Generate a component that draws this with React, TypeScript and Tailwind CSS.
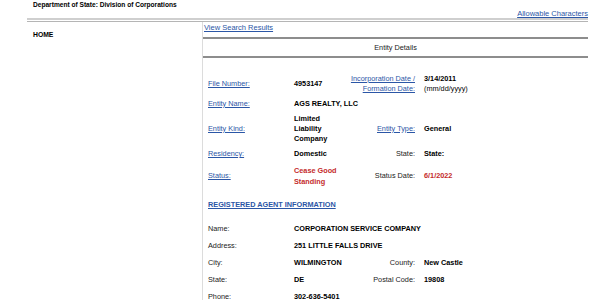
const link = "text-[#2b56a6] underline underline-offset-[1px]"

const Row = ({ children }: { children: React.ReactNode }) => (
    <div className="contents">{children}</div>
)

export default function App() {
    return (
        <div className="w-[600px] h-[300px] overflow-hidden bg-white text-[#222] font-['Liberation_Sans',Arial,sans-serif] text-[7.3px] leading-[10px]">
            <div className="pl-[33px] pt-[0px] font-bold leading-[9px] text-black text-[6.6px]">
                Department of State: Division of Corporations
            </div>
            <div className="flex justify-end pr-[12px] text-[7.5px] leading-[9px]">
                <span className={link}>Allowable Characters</span>
            </div>
            <div className="ml-[27px] mr-[12px]">
                <div className="h-[2px] bg-[#cfcfcf]" />
                <div className="mt-[1px] h-px bg-[#b5b5b5]" />
                <div className="flex">
                    <div className="w-[175px] pl-[6px] pt-[8px] font-bold text-black text-[6.8px]">HOME</div>
                    <div className="flex-1 border-l border-[#dcdcdc]">
                        <div className="h-[17px] border-b-2 border-[#8d8d8d] pl-[1px] pt-[1px]">
                            <span className={link + " text-[7.5px]"}>View Search Results</span>
                        </div>
                        <div className="h-[19px] border-b-2 border-[#8d8d8d] flex items-center justify-center">
                            Entity Details
                        </div>
                        <div className="pl-[5px] pt-[13px] grid grid-cols-[86px_52px_78px_1fr] items-center">
                            <Row>
                                <div className="py-[2.5px]"><span className={link}>File Number:</span></div>
                                <div className="py-[2.5px] font-bold text-black">4953147</div>
                                <div className="py-[2.5px] pr-[9px] text-right"><span className={link}>Incorporation Date / Formation Date:</span></div>
                                <div className="py-[2.5px] text-black"><span className="font-bold">3/14/2011</span><br />(mm/dd/yyyy)</div>
                            </Row>
                            <Row>
                                <div className="py-[2.5px]"><span className={link}>Entity Name:</span></div>
                                <div className="py-[2.5px] col-span-3 font-bold text-black">AGS REALTY, LLC</div>
                            </Row>
                            <Row>
                                <div className="py-[2.5px]"><span className={link}>Entity Kind:</span></div>
                                <div className="py-[2.5px] font-bold text-black">Limited Liability Company</div>
                                <div className="py-[2.5px] pr-[9px] text-right"><span className={link}>Entity Type:</span></div>
                                <div className="py-[2.5px] font-bold text-black">General</div>
                            </Row>
                            <Row>
                                <div className="py-[3px]"><span className={link}>Residency:</span></div>
                                <div className="py-[3px] font-bold text-black">Domestic</div>
                                <div className="py-[3px] pr-[9px] text-right">State:</div>
                                <div className="py-[3px] font-bold text-black">State:</div>
                            </Row>
                            <Row>
                                <div className="py-[3px]"><span className={link}>Status:</span></div>
                                <div className="py-[3px] font-bold text-[#c42b2b] leading-[11px]">Cease Good Standing</div>
                                <div className="py-[3px] pr-[9px] text-right">Status Date:</div>
                                <div className="py-[3px] font-bold text-[#c42b2b]">6/1/2022</div>
                            </Row>
                        </div>
                        <div className="pl-[5px] pt-[10px] pb-[10px] font-bold">
                            <span className={link}>REGISTERED AGENT INFORMATION</span>
                        </div>
                        <div className="pl-[5px] grid grid-cols-[86px_52px_78px_1fr] items-center">
                            <Row>
                                <div className="py-[3.5px]">Name:</div>
                                <div className="py-[3.5px] col-span-3 font-bold text-black">CORPORATION SERVICE COMPANY</div>
                            </Row>
                            <Row>
                                <div className="py-[3.5px]">Address:</div>
                                <div className="py-[3.5px] col-span-3 font-bold text-black">251 LITTLE FALLS DRIVE</div>
                            </Row>
                            <Row>
                                <div className="py-[3.5px]">City:</div>
                                <div className="py-[3.5px] font-bold text-black">WILMINGTON</div>
                                <div className="py-[3.5px] pr-[9px] text-right">County:</div>
                                <div className="py-[3.5px] font-bold text-black">New Castle</div>
                            </Row>
                            <Row>
                                <div className="py-[3.5px]">State:</div>
                                <div className="py-[3.5px] font-bold text-black">DE</div>
                                <div className="py-[3.5px] pr-[9px] text-right">Postal Code:</div>
                                <div className="py-[3.5px] font-bold text-black">19808</div>
                            </Row>
                            <Row>
                                <div className="py-[3.5px]">Phone:</div>
                                <div className="py-[3.5px] col-span-3 font-bold text-black">302-636-5401</div>
                            </Row>
                        </div>
                    </div>
                </div>
            </div>
        </div>
    )
}
